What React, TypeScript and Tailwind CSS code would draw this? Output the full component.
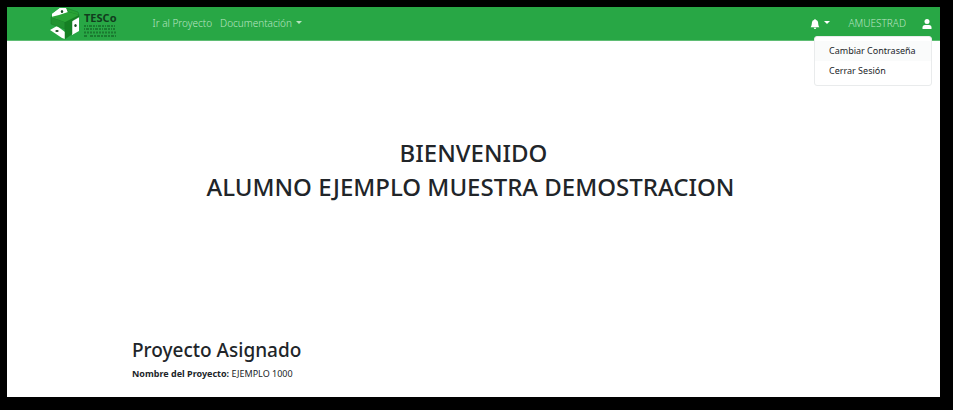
import type { ReactNode } from 'react';

function Logo() {
  return (
    <a href="#inicio" aria-label="TESCo" className="flex items-start text-[#123d1e]">
      <svg viewBox="0 0 30 32" className="h-8 w-[30px]" aria-hidden="true">
        <path d="M2 6 10 0 16 0 18 5 9 11 2 9ZM29 8V23L22 27V13ZM0 22 7 18 15 24V31L12 30Z" fill="#fff" />
        <path d="M1 9 18 4 29 7 15 14Z" fill="#2aa336" stroke="#1b7a28" strokeWidth=".5" />
        <path d="M18 4 16 0 28 4 29 7Z" fill="#27a235" stroke="#1b7a28" strokeWidth=".5" />
        <path d="M1 9 15 14V21L1 16Z" fill="#219331" stroke="#1b7a28" strokeWidth=".5" />
        <path d="M15 14 29 7V9L22 13V26L15 31Z" fill="#148123" stroke="#1b7a28" strokeWidth=".5" />
        <path d="M2 6V9L9 11 18 5 16 0H10Z" fill="#fff" />
        <path d="M1 9 9 7 18 4 29 7 15 14Z" fill="#2aa336" />
        <ellipse cx="12" cy="3.500" rx="1.200" ry="1.500" fill="#174d21" />
        <ellipse cx="25.500" cy="17.500" rx="1.200" ry="1.600" fill="#174d21" />
        <ellipse cx="7" cy="23" rx="1.700" ry="1.100" fill="#174d21" />
      </svg>
      <span className="ml-1 mt-1 flex flex-col">
        <span className="text-[11px] font-bold leading-3">TESCo</span>
        <svg viewBox="0 0 32 14" className="h-3.5 w-8" aria-hidden="true">
          <g fill="none" stroke="#166b2a" opacity=".75">
            <path d="M0 2H32" strokeWidth="2" strokeDasharray="2 1 1 1 3 1" />
            <path d="M0 5H31" strokeWidth="2" strokeDasharray="1 1 3 1 2 1" />
            <path d="M0 8.500H32" strokeWidth="2" strokeDasharray="2 1 2 1" />
            <path d="M0 12H3M6 12H32" strokeWidth="2" strokeDasharray="3 1 2 1" />
          </g>
        </svg>
      </span>
    </a>
  );
}

function Caret() {
  return <span aria-hidden="true" className="mb-0.5 border-x-[3px] border-t-[3px] border-x-transparent border-t-current" />;
}

function NavLink({ children }: { children: ReactNode }) {
  return <a href="#proyecto" className="font-light text-[#b9e4c2]">{children}</a>;
}

export default function App() {
  return (
    <div className="flex min-h-screen flex-col bg-black pt-[7px] pr-[13px] pb-[13px] pl-[7px] font-['Noto_Sans','Open_Sans',sans-serif] text-[#212529]">
      <div className="flex grow flex-col bg-white">
        <header className="relative flex h-[34px] items-center border-b border-[#5fbd74] bg-[#28a745] pr-2 pl-[43px] text-[10px]">
          <Logo />
          <nav className="ml-9 flex items-center gap-2">
            <NavLink>Ir al Proyecto</NavLink>
            <button type="button" className="flex items-center gap-1 font-light text-[#b9e4c2]">
              Documentación <Caret />
            </button>
          </nav>
          <div className="ml-auto flex items-center">
            <button type="button" aria-label="Notificaciones" className="flex items-center gap-1 text-white">
              <svg viewBox="0 0 16 16" className="size-2.5" fill="currentColor" aria-hidden="true">
                <path d="M8 16a2 2 0 0 0 2-2H6a2 2 0 0 0 2 2m.995-14.901a1 1 0 1 0-1.990 0A5 5 0 0 0 3 6c0 1.098-.5 6-2 7h14c-1.500-1-2-5.902-2-7 0-2.420-1.720-4.440-4.005-4.901" />
              </svg>
              <Caret />
            </button>
            <span className="ml-[18px] font-light text-[#b9e4c2]">AMUESTRAD</span>
            <button type="button" aria-label="Cuenta" className="ml-4 text-white">
              <svg viewBox="0 0 10 10" className="size-2.5" fill="currentColor" aria-hidden="true">
                <circle cx="5" cy="2.500" r="2.500" />
                <path d="M.5 10V8.500Q.5 6 3 6H7Q9.500 6 9.500 8.500V10Z" />
              </svg>
            </button>
          </div>
          <ul className="absolute top-[29px] right-2 z-10 flex w-[118px] flex-col rounded-[3px] border border-[#e9ebec] bg-white py-1 text-[9px] leading-5 text-[#212529]">
            <li className="bg-[#fafbfb]"><a href="#contrasena" className="block px-3.5">Cambiar Contraseña</a></li>
            <li><a href="#salir" className="block px-3.5">Cerrar Sesión</a></li>
          </ul>
        </header>
        <main className="grow pt-[95px] pb-4">
          <h1 className="text-center text-[24px] leading-[34px] font-medium">
            BIENVENIDO<br />ALUMNO EJEMPLO MUESTRA DEMOSTRACION&nbsp;
          </h1>
          <section className="mt-[134px] px-[125px]">
            <h2 className="text-[19px] leading-6 font-medium">Proyecto Asignado</h2>
            <p className="mt-1 text-[9px] leading-[15px]"><strong>Nombre del Proyecto:</strong> EJEMPLO 1000</p>
          </section>
        </main>
      </div>
    </div>
  );
}
